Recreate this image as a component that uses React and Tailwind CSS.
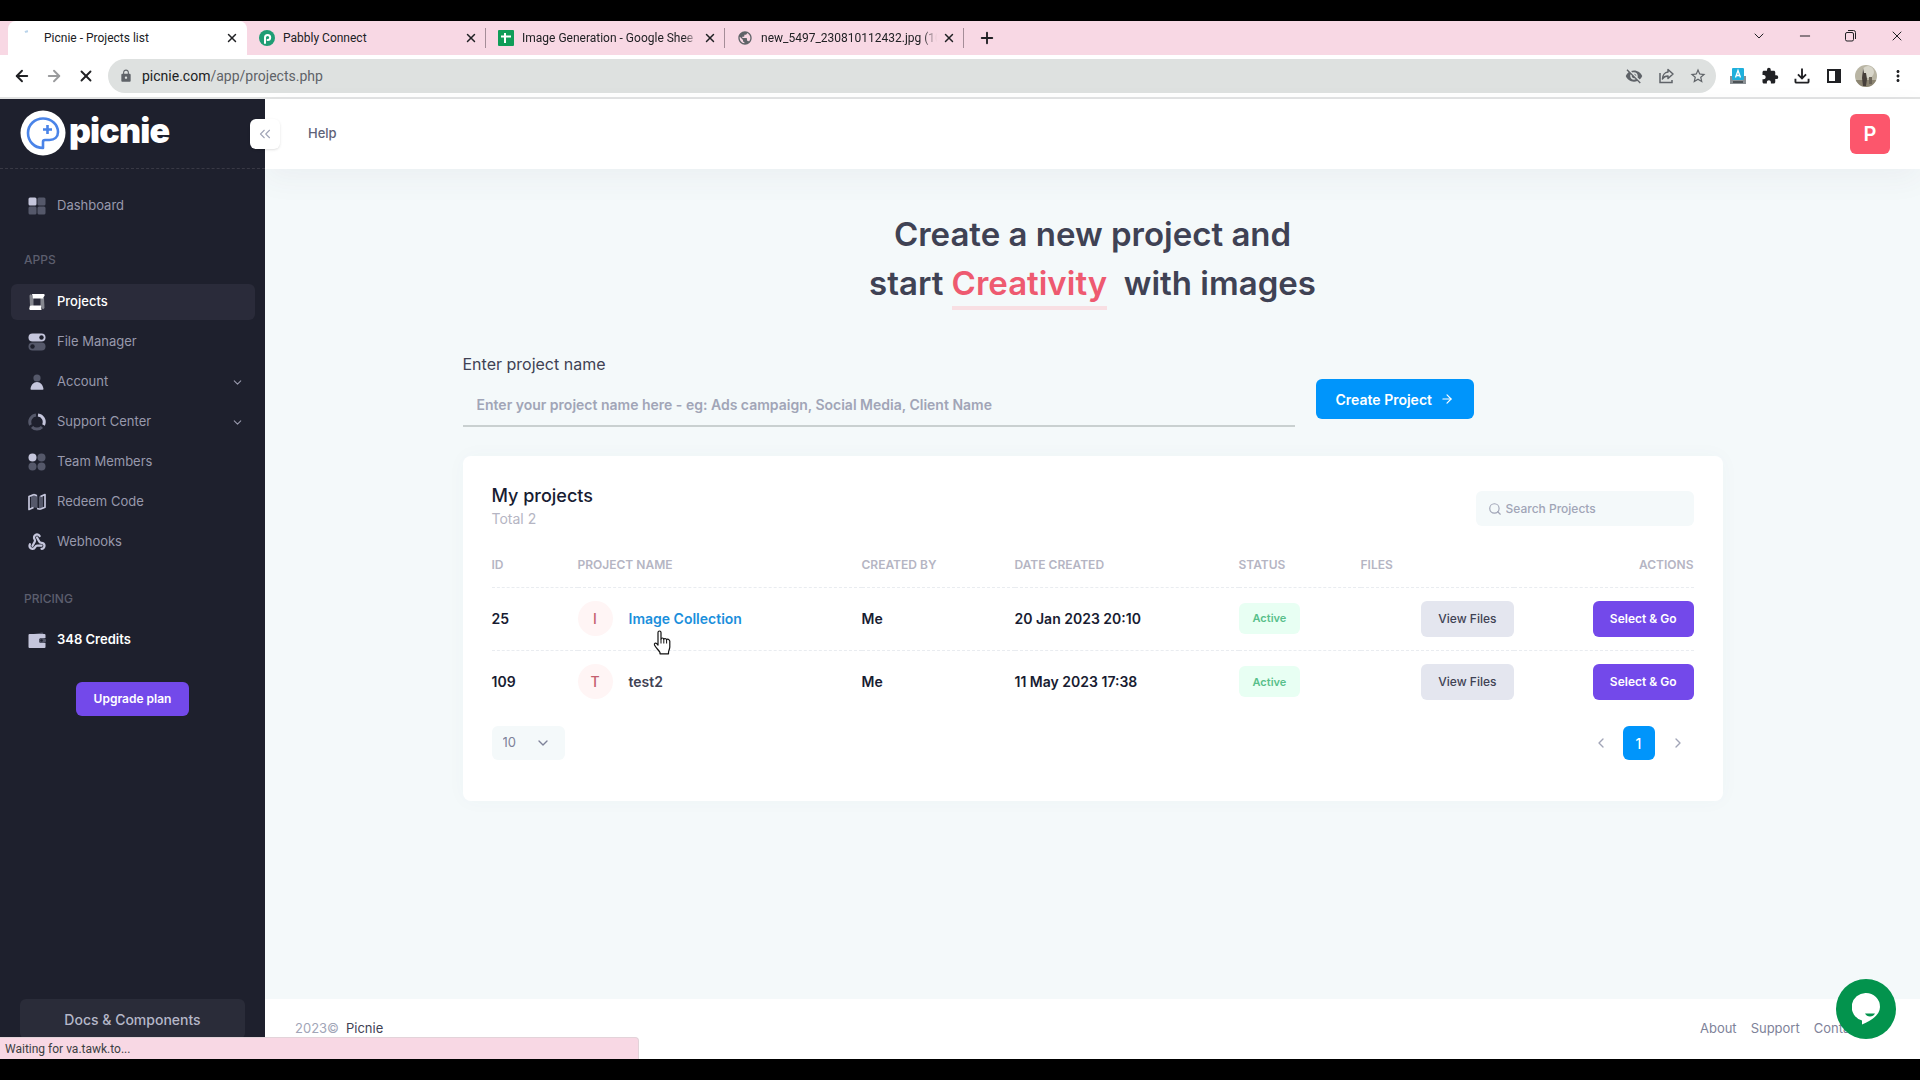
import { useState } from "react";
import {
  ArrowLeft,
  ArrowRight,
  ChevronDown,
  ChevronLeft,
  ChevronRight,
  ChevronsLeft,
  Minus,
  Plus,
  Search,
  Webhook,
  X,
} from "lucide-react";
import {
  MdExtension,
  MdLock,
  MdMoreVert,
  MdOutlineFileDownload,
  MdPublic,
  MdStarBorder,
  MdVisibilityOff,
} from "react-icons/md";

const tabs = [
  { title: "Picnie - Projects list", icon: "loading", active: true },
  { title: "Pabbly Connect", icon: "pabbly" },
  { title: "Image Generation - Google Shee", icon: "sheets", fade: true },
  { title: "new_5497_230810112432.jpg (10", icon: "globe", fade: true },
];

const menu = [
  { label: "Projects", icon: "projects", active: true },
  { label: "File Manager", icon: "files" },
  { label: "Account", icon: "account", arrow: true },
  { label: "Support Center", icon: "support", arrow: true },
  { label: "Team Members", icon: "team" },
  { label: "Redeem Code", icon: "redeem" },
  { label: "Webhooks", icon: "webhooks" },
];

const projects = [
  { id: 25, name: "Image Collection", by: "Me", date: "20 Jan 2023 20:10", status: "Active", hovered: true },
  { id: 109, name: "test2", by: "Me", date: "11 May 2023 17:38", status: "Active" },
];

function TabIcon({ name }) {
  if (name === "pabbly") {
    return (
      <svg viewBox="0 0 16 16" className="h-4 w-4 shrink-0">
        <circle cx="8" cy="8" r="8" fill="#1f9d74" />
        <path
          d="M6 13V7.500a2.600 2.600 0 1 1 2.600 2.600"
          fill="none"
          stroke="#fff"
          strokeWidth="2"
          strokeLinecap="round"
        />
      </svg>
    );
  }
  if (name === "sheets") {
    return (
      <svg viewBox="0 0 16 16" className="h-4 w-4 shrink-0">
        <rect width="16" height="16" rx="1" fill="#0f9d58" />
        <path d="M7 3v10M3 6.500h10" stroke="#fff" strokeWidth="2" />
      </svg>
    );
  }
  if (name === "globe") {
    return <MdPublic className="h-4 w-4 shrink-0 text-[#5f6368]" />;
  }
  return (
    <svg viewBox="0 0 16 16" className="h-4 w-4 shrink-0">
      <path d="M5 2.200a7 7 0 0 1 3-1" fill="none" stroke="#b9d3ea" strokeWidth="2" />
    </svg>
  );
}

function MenuIcon({ name }) {
  const light = "#c5c6dc";
  const dim = "#55586a";
  const cls = "h-[18px] w-[18px] shrink-0";
  switch (name) {
    case "dashboard":
      return (
        <svg viewBox="0 0 18 18" className={cls}>
          <rect x="0.5" y="0.5" width="8" height="8" rx="1.5" fill={light} />
          <rect x="9.5" y="0.5" width="8" height="8" rx="1.5" fill={dim} />
          <rect x="0.5" y="9.5" width="8" height="8" rx="1.5" fill={dim} />
          <rect x="9.5" y="9.5" width="8" height="8" rx="1.5" fill={dim} />
        </svg>
      );
    case "projects":
      return (
        <svg viewBox="0 0 18 18" className={cls}>
          <path d="M1.500 2.500 3 1l2.500 4v9L2 12z" fill="#85878f" />
          <path d="M16.500 15 15 16.500 12.500 13V5L16 5z" fill="#85878f" />
          <path d="M4 1h12l.8 1-1.800 3.500H5z" fill="#fff" />
          <path d="M13 12.500l.5 4.500H2l-.8-1L2 12.500z" fill="#fff" />
        </svg>
      );
    case "files":
      return (
        <svg viewBox="0 0 18 18" className={cls}>
          <rect x="0.5" y="0.5" width="17" height="8" rx="4" fill={light} />
          <circle cx="13.5" cy="4.5" r="2.2" fill="#1e202d" />
          <rect x="0.5" y="9.5" width="17" height="8" rx="4" fill={dim} />
          <circle cx="4.5" cy="13.5" r="2.2" fill="#1e202d" />
        </svg>
      );
    case "account":
      return (
        <svg viewBox="0 0 18 18" className={cls}>
          <circle cx="9" cy="5" r="3.6" fill={dim} />
          <path d="M2.500 16c.5-4 3-7 6.500-7s6 3 6.500 7q0 .8-.8.8H3.300q-.8 0-.8-.8z" fill={light} />
        </svg>
      );
    case "support":
      return (
        <svg viewBox="0 0 18 18" className={cls} fill="none" strokeWidth="3">
          <path d="M10 2a7 7 0 0 1 5.500 10" stroke={light} />
          <path d="M14 14a7 7 0 0 1-10 0" stroke={dim} />
          <path d="M2.500 12A7 7 0 0 1 8 2" stroke={dim} />
        </svg>
      );
    case "team":
      return (
        <svg viewBox="0 0 18 18" className={cls}>
          <circle cx="4.5" cy="4.5" r="4" fill={light} />
          <circle cx="13.5" cy="4.5" r="4" fill={dim} />
          <circle cx="4.5" cy="13.5" r="4" fill={dim} />
          <circle cx="13.5" cy="13.5" r="4" fill={dim} />
        </svg>
      );
    case "redeem":
      return (
        <svg viewBox="0 0 18 18" className={cls}>
          <path d="M3 3l4-1.500 2.500 1.500v12L6 14.500 3 16z" fill={dim} />
          <path d="M11 3.500 15 2v13l-4 1z" fill={dim} />
          <path
            d="M6 1.500 1 3.500v13l4.500-2M6 1.500l3 1.200M12 16.300l5-2V1.500l-4.500 2M9 15.500l3 .8"
            fill="none"
            stroke={light}
            strokeWidth="1.7"
            strokeLinejoin="round"
          />
        </svg>
      );
    case "webhooks":
      return <Webhook className={`${cls} text-[#c5c6dc]`} strokeWidth={3} />;
    default:
      return (
        <svg viewBox="0 0 18 18" className={cls}>
          <path d="M3 3.500 14 1.500q1.500 0 1.500 2z" fill={dim} />
          <path d="M1.500 3h15q1 0 1 1v3h-4a2.500 2.500 0 0 0 0 5h4v4q0 1-1 1h-15q-1 0-1-1V4q0-1 1-1z" fill={light} />
          <rect x="11" y="7" width="7" height="5" rx="2.5" fill={dim} />
          <circle cx="13.5" cy="9.5" r="1.3" fill="#1e202d" />
        </svg>
      );
  }
}

function BrowserBar() {
  return (
    <header className="font-['Roboto','Noto_Sans',sans-serif] text-[#202124]">
      <div className="flex h-[34px] items-stretch bg-[#f8d8e4] pl-2">
        {tabs.map((tab) => (
          <div
            key={tab.title}
            className={`flex w-[239px] items-center pl-3 text-[12px] ${
              tab.active ? "rounded-t-lg bg-white" : ""
            }`}
          >
            <TabIcon name={tab.icon} />
            <span
              className={`ml-2 w-[176px] whitespace-nowrap ${
                tab.fade ? "[mask-image:linear-gradient(to_right,black_92%,transparent)]" : ""
              }`}
            >
              {tab.title}
            </span>
            <button aria-label="Close tab" className="ml-[5px]">
              <X className="h-[14px] w-[14px]" strokeWidth={2.5} />
            </button>
            {!tab.active && <span className="ml-auto h-5 w-px bg-[#a58d98]" />}
          </div>
        ))}
        <button aria-label="New tab" className="ml-[14px]">
          <Plus className="h-[18px] w-[18px]" strokeWidth={2.5} />
        </button>
        <div className="mb-1 ml-auto flex items-center">
          <button aria-label="Search tabs" className="flex w-[46px] justify-center">
            <ChevronDown className="h-4 w-4" strokeWidth={1.5} />
          </button>
          <button aria-label="Minimize" className="flex w-[46px] justify-center">
            <Minus className="h-4 w-4" strokeWidth={1.5} />
          </button>
          <button aria-label="Restore" className="flex w-[46px] justify-center">
            <svg viewBox="0 0 12 12" className="h-3 w-3" fill="none" stroke="currentColor">
              <rect x="0.5" y="2.5" width="8" height="8.5" rx="1.5" />
              <path d="M3 .5h5.500a2 2 0 0 1 2 2V9" />
            </svg>
          </button>
          <button aria-label="Close window" className="flex w-[46px] justify-center">
            <X className="h-4 w-4" strokeWidth={1.5} />
          </button>
        </div>
      </div>

      <div className="flex h-[44px] items-center border-b-2 border-[#e2e3e3] bg-white pl-[13px] pr-[13px]">
        <button aria-label="Back" className="flex w-8">
          <ArrowLeft className="h-[18px] w-[18px]" strokeWidth={2.5} />
        </button>
        <button aria-label="Forward" className="flex w-8 text-[#9a9b9d]">
          <ArrowRight className="h-[18px] w-[18px]" strokeWidth={2.5} />
        </button>
        <button aria-label="Stop loading" className="flex w-[31px]">
          <X className="h-[18px] w-[18px]" strokeWidth={2.5} />
        </button>
        <div className="flex h-[34px] flex-1 items-center rounded-full bg-[#dee1e0] pl-[11px] pr-[9px] text-[#5f6368]">
          <MdLock className="h-[14px] w-[14px]" />
          <span className="ml-[9px] text-[14px]">
            <span className="text-[#202124]">picnie.com</span>/app/projects.php
          </span>
          <div className="ml-auto flex items-center gap-[14px]">
            <MdVisibilityOff className="h-[18px] w-[18px]" />
            <svg viewBox="0 0 18 18" className="h-[18px] w-[18px]" fill="none" stroke="currentColor" strokeWidth="1.5">
              <path d="M3 6v9.500h12V13" />
              <path d="M11 2.500 16 7l-5 4.500V9C8 9 6.500 10 5.500 12 5.500 8 8 5.300 11 5z" strokeLinejoin="round" />
            </svg>
            <MdStarBorder className="h-[18px] w-[18px]" />
          </div>
        </div>
        <div className="ml-[13px] flex items-center gap-[14px]">
          <svg viewBox="0 0 18 18" className="h-[18px] w-[18px]">
            <path d="M1 9h16v8H1z" fill="#8a9094" />
            <path d="M4 15h10" stroke="#4d5357" strokeWidth="2" />
            <rect x="3" y="1" width="12" height="12" rx="1" fill="#1fb0dc" />
            <path d="M6.500 10.500 9 3.500l2.500 7M7.500 8.500h3" fill="none" stroke="#fff" strokeWidth="1.3" />
          </svg>
          <MdExtension className="h-[18px] w-[18px]" />
          <MdOutlineFileDownload className="h-[18px] w-[18px] scale-125" />
          <svg viewBox="0 0 18 18" className="h-[18px] w-[18px]">
            <rect x="3" y="3" width="12" height="12" fill="none" stroke="currentColor" strokeWidth="2" />
            <path d="M10 3h5v12h-5z" fill="currentColor" />
          </svg>
          <svg viewBox="0 0 22 22" className="-mx-[2px] h-[22px] w-[22px]">
            <clipPath id="face">
              <circle cx="11" cy="11" r="11" />
            </clipPath>
            <g clipPath="url(#face)">
              <path d="M0 0h22v22H0z" fill="#b9b5a4" />
              <circle cx="13" cy="7" r="6" fill="#d8d6ca" />
              <path d="M0 15h22v7H0z" fill="#8b8471" />
              <path d="M8 3l1 5h2l1 6-1 7H8l-1-8z" fill="#463f3a" />
              <path d="M14 12h3v7h-3z" fill="#6b6458" />
            </g>
          </svg>
          <MdMoreVert className="h-[18px] w-[18px]" />
        </div>
      </div>
    </header>
  );
}

function MenuItem({ item }) {
  return (
    <a
      href="#"
      className={`flex h-9 items-center rounded-md pl-[17px] pr-[11px] text-[13px] ${
        item.active ? "bg-[#2a2b3a] font-medium text-white" : "text-[#9899ac]"
      }`}
    >
      <MenuIcon name={item.icon} />
      <span className={`ml-[11px] ${item.bold ? "font-semibold text-white" : ""}`}>{item.label}</span>
      {item.arrow && <ChevronDown className="ml-auto h-[13px] w-[13px]" />}
    </a>
  );
}

function Sidebar() {
  return (
    <aside className="relative flex w-[265px] shrink-0 flex-col bg-[#1e202d]">
      <div className="flex h-[70px] items-center border-b border-dashed border-[#393945] pb-[2px] pl-5">
        <svg viewBox="0 0 46 46" className="h-[46px] w-[46px] shrink-0">
          <circle cx="23" cy="23" r="22.5" fill="#fff" />
          <path
            d="M23 38C14 38 8 31 8 23S14.500 8.500 23 8.500 38 14.500 38 22c0 5-3.500 8-8.500 8H25q-2 0-2 2z"
            fill="none"
            stroke="#4a84e8"
            strokeWidth="2.6"
            strokeLinejoin="round"
          />
          <path d="M27.500 15v9M23 19.500h9" stroke="#4a84e8" strokeWidth="2.6" />
        </svg>
        <span className="ml-[3px] pb-1 text-[34px] font-black leading-none tracking-tight text-white">picnie</span>
      </div>
      <button
        aria-label="Collapse sidebar"
        className="absolute -right-[15px] top-5 z-10 flex h-[30px] w-[30px] items-center justify-center rounded-md bg-white text-[#a1a5b7] shadow-sm"
      >
        <ChevronsLeft className="h-[18px] w-[18px]" strokeWidth={1.5} />
      </button>

      <nav className="flex flex-col pl-[11px] pr-[10px] pt-[19px]">
        <MenuItem item={{ label: "Dashboard", icon: "dashboard" }} />
        <h2 className="ml-[13px] mt-[26px] text-[12px] font-medium leading-5 text-[#5c5e6e]">APPS</h2>
        <div className="mt-[14px] flex flex-col gap-1">
          {menu.map((item) => (
            <MenuItem key={item.label} item={item} />
          ))}
        </div>
        <h2 className="ml-[13px] mt-[29px] text-[12px] font-medium leading-5 text-[#5c5e6e]">PRICING</h2>
        <div className="mt-[13px]">
          <MenuItem item={{ label: "348 Credits", icon: "wallet", bold: true }} />
        </div>
      </nav>
      <button className="mx-auto mt-6 h-[34px] rounded-md bg-[#7349ea] px-[18px] text-[12px] font-semibold text-white">
        Upgrade plan
      </button>
      <div className="mt-auto px-5 pb-5">
        <a
          href="#"
          className="flex h-10 items-center justify-center rounded-md bg-[#2a2c39] text-[14px] font-medium text-[#b5b7c8]"
        >
          Docs &amp; Components
        </a>
      </div>
    </aside>
  );
}

function HandCursor() {
  return (
    <svg viewBox="0 0 18 25" className="pointer-events-none absolute left-6 top-[22px] h-[25px] w-[18px]">
      <path
        d="M5 15V2.500a1.500 1.500 0 0 1 3 0V9q0-1 1.300-1t1.500 1.300q.2-.8 1.300-.8t1.400 1.300q.3-.6 1.300-.6T16.800 11v6c0 2-1.300 3.500-1.300 5.500v1.300H7V22.500c-1-2-4-4.500-5.500-7.500-.6-1.600 1.200-2.400 2.200-1.300z"
        fill="#fff"
        stroke="#111"
        strokeWidth="1.2"
        strokeLinejoin="round"
      />
      <path d="M8 9v4.500M10.800 9.500v4M13.600 10v3.500" stroke="#111" strokeWidth="1" />
    </svg>
  );
}

function ProjectTable({ rows }) {
  return (
    <table className="mt-[13px] w-full table-fixed text-left text-[14px] text-[#181c32]">
      <colgroup>
        <col className="w-[86px]" />
        <col />
        <col className="w-[153px]" />
        <col className="w-[224px]" />
        <col className="w-[122px]" />
        <col className="w-[153px]" />
        <col className="w-[180px]" />
      </colgroup>
      <thead>
        <tr className="h-11 text-[12px] text-[#b5b5c3]">
          <th className="font-semibold">ID</th>
          <th className="font-semibold">PROJECT NAME</th>
          <th className="font-semibold">CREATED BY</th>
          <th className="font-semibold">DATE CREATED</th>
          <th className="font-semibold">STATUS</th>
          <th className="font-semibold">FILES</th>
          <th className="text-right font-semibold">ACTIONS</th>
        </tr>
      </thead>
      <tbody>
        {rows.map((p) => (
          <tr key={p.id} className="h-[63px] border-t border-dashed border-[#e9ecf0] font-semibold">
            <td>{p.id}</td>
            <td>
              <div className="flex items-center">
                <span className="flex h-[35px] w-[35px] items-center justify-center rounded-full bg-[#fff5f5] font-medium text-[#c4606f]">
                  {p.name[0].toUpperCase()}
                </span>
                <div className="relative ml-4">
                  <a href="#" className={p.hovered ? "text-[#1b8fdc]" : "text-[#3f4254]"}>
                    {p.name}
                  </a>
                  {p.hovered && <HandCursor />}
                </div>
              </div>
            </td>
            <td>{p.by}</td>
            <td>{p.date}</td>
            <td>
              <span className="inline-flex h-[31px] items-center rounded-md bg-[#e8fff3] px-[14px] text-[11px] text-[#58bf8b]">
                {p.status}
              </span>
            </td>
            <td className="text-right">
              <button className="h-9 rounded-md bg-[#e4e6ef] px-[17px] text-[12px] font-medium text-[#3f4254]">
                View Files
              </button>
            </td>
            <td className="text-right">
              <button className="h-9 rounded-md bg-[#7349ea] px-[17px] text-[12px] text-white">
                Select &amp; Go
              </button>
            </td>
          </tr>
        ))}
      </tbody>
    </table>
  );
}

export default function App() {
  const [name, setName] = useState("");
  const [search, setSearch] = useState("");
  const rows = projects.filter((p) => p.name.toLowerCase().includes(search.toLowerCase()));

  return (
    <div className="flex min-h-screen flex-col bg-black py-[21px] font-['Inter',sans-serif]">
      <BrowserBar />

      <div className="relative flex flex-1 bg-[#f4f9fa]">
        <Sidebar />

        <div className="flex min-w-0 flex-1 flex-col">
          <div className="flex h-[70px] items-center justify-between bg-white pl-[43px] pr-[30px] shadow-[0_10px_30px_0_rgba(82,63,105,0.05)]">
            <a href="#" className="text-[13px] font-medium text-[#5e6278]">
              Help
            </a>
            <button className="h-10 w-10 rounded-md bg-[#fc566c] text-[20px] font-semibold text-white">P</button>
          </div>

          <main className="mx-auto w-full max-w-[1260px] flex-1">
            <h1 className="mt-[41px] text-center text-[33px] font-semibold leading-[49px] text-[#3f4254]">
              Create a new project and
              <br />
              start <span className="inline-block border-b-4 border-[#f8dfe3] leading-[46px] text-[#ee5a70]">Creativity</span>
              &nbsp; with images
            </h1>

            <div className="mt-[42px] flex items-start">
              <div className="w-[832px]">
                <label htmlFor="project-name" className="block text-[16px] leading-6 text-[#3f4254]">
                  Enter project name
                </label>
                <input
                  id="project-name"
                  value={name}
                  onChange={(e) => setName(e.target.value)}
                  placeholder="Enter your project name here - eg: Ads campaign, Social Media, Client Name"
                  className="mt-2 h-[43px] w-full border-b-2 border-[#c9d0d0] px-[14px] text-[14px] font-semibold outline-none placeholder:text-[#a1a5b7]"
                />
              </div>
              <button className="ml-[21px] mt-[27px] flex h-10 items-center rounded-md bg-[#0095fb] px-5 text-[14px] font-semibold text-white">
                Create Project
                <ArrowRight className="ml-2 h-[14px] w-[14px]" />
              </button>
            </div>

            <section className="mt-[29px] rounded-lg bg-white px-[29px] pb-[41px] pt-7 shadow-[0_0_20px_0_rgba(76,87,125,0.03)]">
              <div className="flex items-end justify-between">
                <div>
                  <h2 className="text-[18px] font-medium leading-6 text-[#181c32]">My projects</h2>
                  <p className="mb-px text-[14px] leading-[21px] text-[#b5b5c3]">Total 2</p>
                </div>
                <label className="mb-1 flex h-[35px] w-[218px] items-center rounded-md bg-[#f4f9fa] pl-3 text-[#a1a5b7]">
                  <Search className="h-[14px] w-[14px] shrink-0" />
                  <input
                    aria-label="Search Projects"
                    value={search}
                    onChange={(e) => setSearch(e.target.value)}
                    placeholder="Search Projects"
                    className="ml-1 min-w-0 flex-1 text-[12px] font-medium outline-none placeholder:text-[#a1a5b7]"
                  />
                </label>
              </div>

              <ProjectTable rows={rows} />

              <div className="mt-[13px] flex items-center justify-between">
                <div className="relative">
                  <select
                    aria-label="Rows per page"
                    className="h-[34px] w-[73px] appearance-none rounded-md bg-[#f4f9fa] pl-[11px] text-[13px] text-[#7e8299]"
                  >
                    <option>10</option>
                    <option>25</option>
                    <option>50</option>
                  </select>
                  <ChevronDown className="pointer-events-none absolute right-[14px] top-[9px] h-4 w-4 text-[#7e8299]" />
                </div>
                <div className="flex items-center text-[#a1a5b7]">
                  <button aria-label="Previous page" className="mr-[14px]">
                    <ChevronLeft className="h-4 w-4" />
                  </button>
                  <button className="h-[34px] w-8 rounded-md bg-[#0095fb] text-[14px] font-medium text-white">1</button>
                  <button aria-label="Next page" className="ml-[15px] mr-2">
                    <ChevronRight className="h-4 w-4" />
                  </button>
                </div>
              </div>
            </section>
          </main>

          <footer className="flex h-[60px] items-center justify-between bg-white pl-[30px] pr-[58px] text-[13px] text-[#7e8299]">
            <p>
              <span className="text-[#a1a5b7]">2023©</span>
              <a href="#" className="ml-[7px] text-[#3f4254]">
                Picnie
              </a>
            </p>
            <div className="flex gap-[14px]">
              <a href="#">About</a>
              <a href="#">Support</a>
              <a href="#">Contact</a>
            </div>
          </footer>
        </div>

        <div className="absolute bottom-0 left-0 flex h-[22px] w-[639px] items-center rounded-tr-sm border-r border-t border-[#e3d3d9] bg-[#f8d8e4] pl-[5px] font-['Roboto','Noto_Sans',sans-serif] text-[12px] text-[#3c4043]">
          Waiting for va.tawk.to...
        </div>
        <button
          aria-label="Open chat"
          className="absolute bottom-5 right-6 flex h-[60px] w-[60px] items-center justify-center rounded-full bg-[#03934d]"
        >
          <svg viewBox="0 0 28 32" className="h-8 w-7">
            <path d="M14 0a14 14 0 0 1 14 14c0 8-9 14-18 17.500v-4A14 14 0 0 1 14 0z" fill="#fff" />
            <path d="M13 20.500h10q-1.500 3-5 3t-5-3z" fill="#03934d" />
          </svg>
        </button>
      </div>
    </div>
  );
}
